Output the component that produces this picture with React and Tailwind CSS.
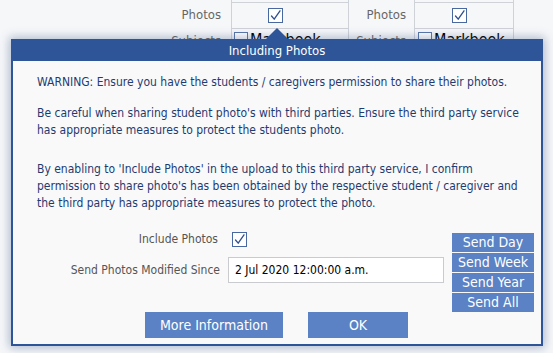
import React from "react";

function Check({ className = "" }) {
  return (
    <div className={"w-[15px] h-[15px] border border-[#4a68a0] bg-white flex items-center justify-center " + className}>
      <svg width="13" height="13" viewBox="0 0 13 13">
        <path d="M2.5 7 L5.2 10.2 L11 1.8" fill="none" stroke="#2f4f8f" strokeWidth="1.3" strokeLinecap="round" strokeLinejoin="round" />
      </svg>
    </div>
  );
}

export default function App() {
  return (
    <div className="w-[553px] h-[353px] bg-[#f6f7f9] relative overflow-hidden font-['DejaVu_Sans_Condensed','Liberation_Sans',sans-serif]">
      {/* background table */}
      <div className="flex flex-col">
        <div className="flex h-[2px]">
          <div className="w-[231px]" />
          <div className="w-[118px] border-l border-r border-[#cfd3d8]" />
          <div className="w-[65px]" />
          <div className="w-[100px] border-l border-r border-[#cfd3d8]" />
        </div>
        <div className="flex h-[26px]">
          <div className="w-[221px] text-right text-[13px] text-[#666] leading-[26px]">Photos</div>
          <div className="ml-[10px] w-[118px] border-t border-l border-r border-[#cfd3d8] flex items-center pl-[36px]">
            <Check />
          </div>
          <div className="w-[57px] text-right text-[13px] text-[#666] leading-[26px]">Photos</div>
          <div className="ml-[8px] w-[100px] border-t border-l border-r border-[#cfd3d8] flex items-center pl-[37px]">
            <Check />
          </div>
        </div>
        <div className="flex h-[11px] overflow-hidden">
          <div className="w-[221px] text-right text-[13px] text-[#666] pt-[5px]">
            <span className="block h-[6px] overflow-hidden leading-[16px]">Subjects</span>
          </div>
          <div className="ml-[10px] w-[118px] border-t border-l border-r border-[#cfd3d8] flex items-start pt-[3px] pl-[2px]">
            <div className="w-[14px] h-[14px] border border-[#5a78aa] bg-white" />
            <span className="ml-[2px] block h-[7px] overflow-hidden text-[16px] leading-[16px] text-black">Markbook</span>
          </div>
          <div className="w-[57px] text-right text-[13px] text-[#666] pt-[5px]">
            <span className="block h-[6px] overflow-hidden leading-[16px]">Subjects</span>
          </div>
          <div className="ml-[8px] w-[100px] border-t border-l border-r border-[#cfd3d8] flex items-start pt-[3px] pl-[3px]">
            <div className="w-[14px] h-[14px] border border-[#5a78aa] bg-white" />
            <span className="ml-[2px] block h-[7px] overflow-hidden text-[16px] leading-[16px] text-black">Markbook</span>
          </div>
        </div>
      </div>

      {/* dialog */}
      <div className="absolute left-[11px] top-[39px] w-[532px] h-[307px] bg-[#2e5597] p-[2px] flex flex-col shadow-[0_0_9px_2px_rgba(50,80,130,0.35)]">
        <svg className="absolute left-[254px] -top-[11px]" width="24" height="12" viewBox="0 0 24 12">
          <path d="M0 12 L12 0 L24 12 Z" fill="#2e5597" />
        </svg>
        <div className="h-[20px] flex items-center justify-center text-white text-[13px]">Including Photos</div>
        <div className="flex-1 bg-[#f9f9fa] flex flex-col">
          <div className="pl-[24px] pt-[13px] text-[12px] leading-[17px] text-[#1f3b70] whitespace-nowrap">
            <p>WARNING: Ensure you have the students / caregivers permission to share their photos.</p>
            <p className="mt-[14px]">
              Be careful when sharing student photo's with third parties. Ensure the third party service
              <br />
              has appropriate measures to protect the students photo.
            </p>
            <p className="mt-[22px]">
              By enabling to 'Include Photos' in the upload to this third party service, I confirm
              <br />
              permission to share photo's has been obtained by the respective student / caregiver and
              <br />
              the third party has appropriate measures to protect the photo.
            </p>
          </div>

          <div className="mt-[19px] flex items-start">
            <div className="grid grid-cols-[207px_216px] gap-x-[8px] gap-y-[10px] items-center text-[12px] text-[#555]">
              <div className="text-right pr-[2px] h-[16px] leading-[16px]">Include Photos</div>
              <div className="h-[16px] flex items-center">
                <Check className="ml-[4px]" />
              </div>
              <div className="text-right">Send Photos Modified Since</div>
              <div className="h-[26px] border border-[#c9cbce] bg-white flex items-center pl-[6px] text-black">
                2 Jul 2020 12:00:00 a.m.
              </div>
            </div>
            <div className="ml-[8px] pt-[2px] w-[82px] flex flex-col gap-[1px]">
              {["Send Day", "Send Week", "Send Year", "Send All"].map((t) => (
                <div key={t} className="h-[19px] bg-[#5a82c5] text-white text-[14px] leading-[19px] text-center">
                  {t}
                </div>
              ))}
            </div>
          </div>

          <div className="flex justify-center gap-[25px] pr-[1px]">
            <div className="w-[138px] h-[26px] bg-[#5a82c5] text-white text-[14px] flex items-center justify-center">More Information</div>
            <div className="w-[100px] h-[26px] bg-[#5a82c5] text-white text-[14px] flex items-center justify-center">OK</div>
          </div>
        </div>
      </div>
    </div>
  );
}
